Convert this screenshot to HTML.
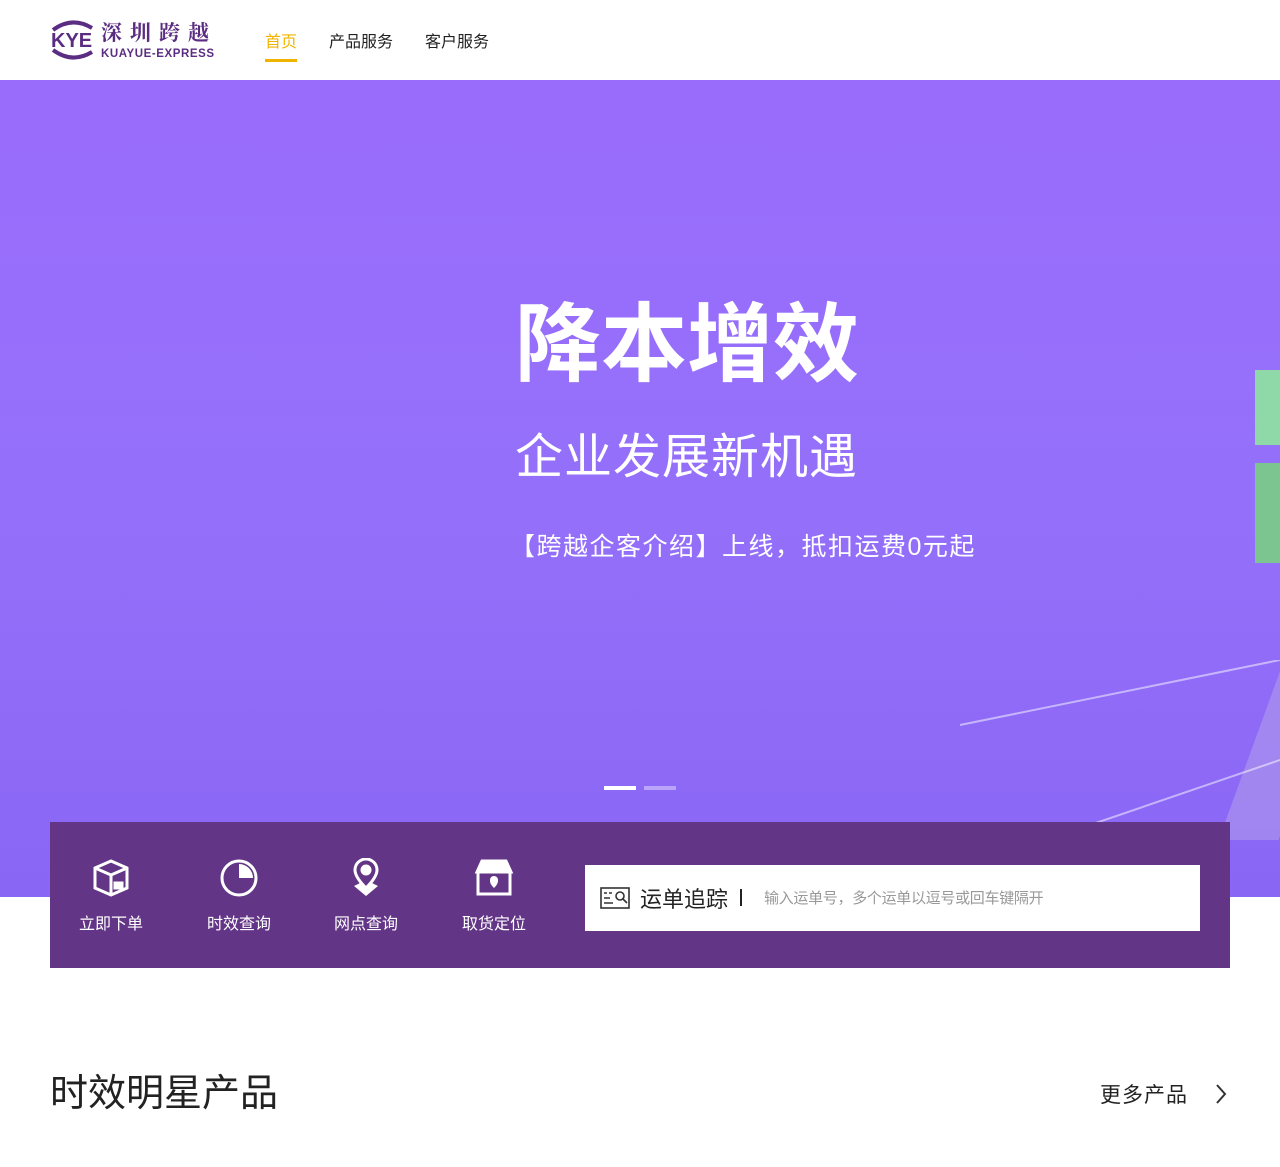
<!DOCTYPE html>
<html><head><meta charset="utf-8"><style>
*{margin:0;padding:0;box-sizing:border-box}
body{width:1280px;height:1167px;background:#fff;font-family:"Liberation Sans","Noto Sans CJK SC",sans-serif;position:relative;overflow:hidden}
.hdr{height:80px;position:relative}
.logo{position:absolute;left:50px;top:18px}
.nav{position:absolute;top:28px;font-size:16px;color:#222}
.hero{position:absolute;top:80px;left:0;width:1280px;height:817px;background:linear-gradient(180deg,#9a6cfc 0%,#9470fa 50%,#8a66f5 100%);overflow:hidden}
.bar{position:absolute;left:50px;top:822px;width:1180px;height:146px;background:#633586}
.it{position:absolute;top:36px;width:80px;text-align:center;color:#fff;font-size:16px}
.it svg{display:block;margin:0 auto 12px}
.search{position:absolute;left:535px;top:43px;width:615px;height:66px;background:#fff}
</style></head><body>
<div class="hdr">
 <div class="logo">
  <svg width="170" height="44" viewBox="0 0 170 44">
   <path d="M3 12 Q22 -2 42 10" stroke="#5a2d82" stroke-width="4" fill="none"/>
   <path d="M3 32 Q22 46 42 34" stroke="#5a2d82" stroke-width="4" fill="none"/>
   <text x="1" y="29" font-family="Liberation Sans" font-weight="bold" font-size="20" fill="#5a2d82">KYE</text>
   <text x="51" y="22" font-family="Noto Serif CJK SC,serif" font-weight="bold" font-size="21" fill="#5a2d82" letter-spacing="8">深圳跨越</text>
   <text x="51" y="39" font-family="Liberation Sans" font-weight="bold" font-size="11.5" fill="#5a2d82" textLength="113">KUAYUE-EXPRESS</text>
  </svg>
 </div>
 <div class="nav" style="left:265px;color:#f0b400">首页</div>
 <div style="position:absolute;left:265px;top:59px;width:32px;height:3px;background:#f0b400"></div>
 <div class="nav" style="left:329px">产品服务</div>
 <div class="nav" style="left:425px">客户服务</div>
</div>
<div class="hero">
 <div style="position:absolute;left:515px;top:215px;font-size:86px;font-weight:bold;color:#fff;letter-spacing:0px;line-height:100px">降本增效</div>
 <div style="position:absolute;left:515px;top:350px;font-size:48px;color:#fff;line-height:56px;letter-spacing:1px">企业发展新机遇</div>
 <div style="position:absolute;left:510px;top:450px;font-size:25px;color:#fff;line-height:34px;letter-spacing:1.5px">【跨越企客介绍】上线，抵扣运费0元起</div>
 <div style="position:absolute;left:604px;top:706px;width:32px;height:4px;background:#fff"></div>
 <div style="position:absolute;left:644px;top:706px;width:32px;height:4px;background:rgba(255,255,255,.4)"></div>
 <div style="position:absolute;left:1255px;top:290px;width:30px;height:75px;background:#8fd8a8"></div>
 <div style="position:absolute;left:1255px;top:383px;width:30px;height:100px;background:#7cc590"></div>
 <div style="position:absolute;left:1255px;top:560px;width:60px;height:200px;background:rgba(200,190,230,.35);transform:skewX(-20deg)"></div>
 <svg style="position:absolute;left:950px;top:580px" width="330" height="170"><path d="M10 65 L330 0" stroke="rgba(255,255,255,.5)" stroke-width="2"/><path d="M140 165 L330 100" stroke="rgba(255,255,255,.5)" stroke-width="2"/></svg>
</div>
<div class="bar">
 <div class="it" style="left:21px"><svg width="40" height="40" viewBox="0 0 40 40" fill="none" stroke="#fff" stroke-width="3"><path d="M20 3 L36 10 V30 L20 37 L4 30 V10 Z"/><path d="M4 10 L20 17 L36 10 M20 17 V37"/><rect x="24" y="25" width="7" height="5" fill="#fff"/></svg>立即下单</div>
 <div class="it" style="left:149px"><svg width="40" height="40" viewBox="0 0 40 40" fill="none" stroke="#fff" stroke-width="3"><circle cx="20" cy="20" r="17"/><path d="M20 6 A14 14 0 0 1 34 20 H20 Z" fill="#fff" stroke="none"/></svg>时效查询</div>
 <div class="it" style="left:276px"><svg width="40" height="40" viewBox="0 0 40 40" fill="none" stroke="#fff" stroke-width="3"><path d="M20 30 C10 20 9 15 9 12 A11 11 0 0 1 31 12 C31 15 30 20 20 30Z"/><circle cx="20" cy="12" r="4" fill="#fff"/><path d="M8 28 L20 38 L32 28 L26 25 L20 30 L14 25Z" fill="#fff" stroke="none"/></svg>网点查询</div>
 <div class="it" style="left:404px"><svg width="40" height="40" viewBox="0 0 40 40" fill="none" stroke="#fff" stroke-width="3"><path d="M8 3 H32 L37 14 H3 Z" fill="#fff"/><rect x="4" y="14" width="32" height="22"/><path d="M20 30 C16 26 16 24 16 22 A4 4 0 0 1 24 22 C24 24 24 26 20 30Z" fill="#fff" stroke="none"/></svg>取货定位</div>
 <div class="search">
  <svg style="position:absolute;left:15px;top:22px" width="30" height="22" viewBox="0 0 30 22" fill="none" stroke="#333" stroke-width="1.6"><rect x="1" y="1" width="28" height="20"/><path d="M4 6h3M9 6h3M4 11h6M4 16h9"/><circle cx="20" cy="9" r="4"/><path d="M23 12l4 4"/></svg>
  <div style="position:absolute;left:55px;top:17px;font-size:22px;color:#222">运单追踪</div>
  <div style="position:absolute;left:155px;top:24px;width:2px;height:17px;background:#222"></div>
  <div style="position:absolute;left:179px;top:22px;font-size:15px;color:#999;letter-spacing:-0.3px">输入运单号，多个运单以逗号或回车键隔开</div>
 </div>
</div>
<div style="position:absolute;left:50px;top:1070px;font-size:38px;color:#222;line-height:48px">时效明星产品</div>
<div style="position:absolute;left:1100px;top:1079px;font-size:21px;color:#222;letter-spacing:1px">更多产品</div>
<svg style="position:absolute;left:1214px;top:1083px" width="14" height="22"><path d="M3 2 L11 11 L3 20" stroke="#333" stroke-width="2" fill="none"/></svg>
</body></html>
